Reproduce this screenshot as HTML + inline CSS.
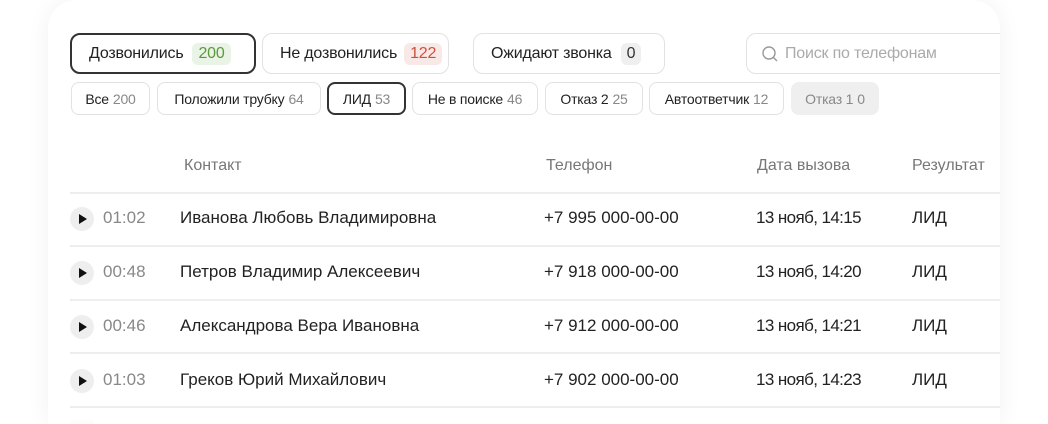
<!DOCTYPE html>
<html><head><meta charset="utf-8"><style>
*{box-sizing:border-box;margin:0;padding:0}
html,body{width:1048px;height:424px;overflow:hidden}
body{background:#fff;font-family:"Liberation Sans","DejaVu Sans",sans-serif;color:#222;position:relative}
.card{position:absolute;left:48px;top:0;width:952px;height:424px;background:#fff;border-radius:28px 28px 0 0;box-shadow:0 0 24px rgba(0,0,0,0.06);overflow:hidden}
.tab{position:absolute;top:33px;height:41px;border:1px solid #e2e2e2;border-radius:10px;font-size:16px;display:flex;align-items:center;padding-left:17px;white-space:nowrap;letter-spacing:-0.2px}
.tab.sel{border:2px solid #333;}
.badge{display:inline-block;margin-left:9px;padding:2px 6px;border-radius:6px;font-size:16px}
.chip{position:absolute;top:82px;height:33px;border:1px solid #e2e2e2;border-radius:8px;font-size:14px;display:flex;align-items:center;justify-content:center;white-space:nowrap;letter-spacing:-0.2px}
.chip span{color:#888;margin-left:4px}
.chip.sel{border:2px solid #333}
.hd{position:absolute;top:157px;font-size:16px;color:#777}
.line{position:absolute;left:22px;width:940px;height:2px;background:#eee}
.row{position:absolute;left:0;width:960px;height:30px;font-size:17px}
.row div{position:absolute;top:0;white-space:nowrap}
.play{width:24px;height:24px;border-radius:50%;background:#eee;left:22px;top:-1px!important}
.play:after{content:"";position:absolute;left:9px;top:7px;border-left:8px solid #111;border-top:5px solid transparent;border-bottom:5px solid transparent}
.fade{position:absolute;left:0;top:408px;width:100%;height:16px;background:rgba(255,255,255,0.75)}
</style></head><body>
<div class="card">
 <div class="tab sel" style="left:22px;width:186px">Дозвонились<span class="badge" style="background:#e9f3e6;color:#5b9a3c">200</span></div>
 <div class="tab" style="left:214px;width:187px">Не дозвонились<span class="badge" style="background:#f8e9e7;color:#d0503a;margin-left:7px">122</span></div>
 <div class="tab" style="left:425px;width:192px">Ожидают звонка<span class="badge" style="background:#efefef;color:#333">0</span></div>
 <div class="tab" style="left:698px;width:270px;color:#aaa;padding-left:14px"><svg width="18" height="18" viewBox="0 0 18 18" style="margin-right:6px"><circle cx="8" cy="8" r="6" fill="none" stroke="#999" stroke-width="1.4"/><path d="M12.5 12.5L16 16" stroke="#999" stroke-width="1.4"/></svg>Поиск по телефонам</div>
 <div class="chip" style="left:23px;width:79px">Все<span>200</span></div>
 <div class="chip" style="left:109px;width:164px">Положили трубку<span>64</span></div>
 <div class="chip sel" style="left:279px;width:79px">ЛИД<span>53</span></div>
 <div class="chip" style="left:364px;width:126px">Не в поиске<span>46</span></div>
 <div class="chip" style="left:497px;width:98px">Отказ 2<span>25</span></div>
 <div class="chip" style="left:601px;width:135px">Автоответчик<span>12</span></div>
 <div class="chip" style="left:743px;width:88px;background:#efefef;border-color:#efefef;color:#888">Отказ 1<span>0</span></div>
 <div class="hd" style="left:136px">Контакт</div>
 <div class="hd" style="left:498px">Телефон</div>
 <div class="hd" style="left:709px">Дата вызова</div>
 <div class="hd" style="left:864px">Результат</div>
 <div class="line" style="top:192px"></div>
 <div class="row" style="top:208px"><div class="play"></div><div style="left:55px;color:#888">01:02</div><div style="left:132px">Иванова Любовь Владимировна</div><div style="left:496px">+7 995 000-00-00</div><div style="left:708px;letter-spacing:-0.6px">13 нояб, 14:15</div><div style="left:864px">ЛИД</div></div>
 <div class="line" style="top:245px"></div>
 <div class="row" style="top:262px"><div class="play"></div><div style="left:55px;color:#888">00:48</div><div style="left:132px">Петров Владимир Алексеевич</div><div style="left:496px">+7 918 000-00-00</div><div style="left:708px;letter-spacing:-0.6px">13 нояб, 14:20</div><div style="left:864px">ЛИД</div></div>
 <div class="line" style="top:299px"></div>
 <div class="row" style="top:316px"><div class="play"></div><div style="left:55px;color:#888">00:46</div><div style="left:132px">Александрова Вера Ивановна</div><div style="left:496px">+7 912 000-00-00</div><div style="left:708px;letter-spacing:-0.6px">13 нояб, 14:21</div><div style="left:864px">ЛИД</div></div>
 <div class="line" style="top:352px"></div>
 <div class="row" style="top:370px"><div class="play"></div><div style="left:55px;color:#888">01:03</div><div style="left:132px">Греков Юрий Михайлович</div><div style="left:496px">+7 902 000-00-00</div><div style="left:708px;letter-spacing:-0.6px">13 нояб, 14:23</div><div style="left:864px">ЛИД</div></div>
 <div class="line" style="top:406px"></div>
 <div style="position:absolute;left:22px;top:420px;width:24px;height:4px;border-radius:12px 12px 0 0;background:#f4f4f4"></div>
 <div class="fade"></div>
</div>
</body></html>
